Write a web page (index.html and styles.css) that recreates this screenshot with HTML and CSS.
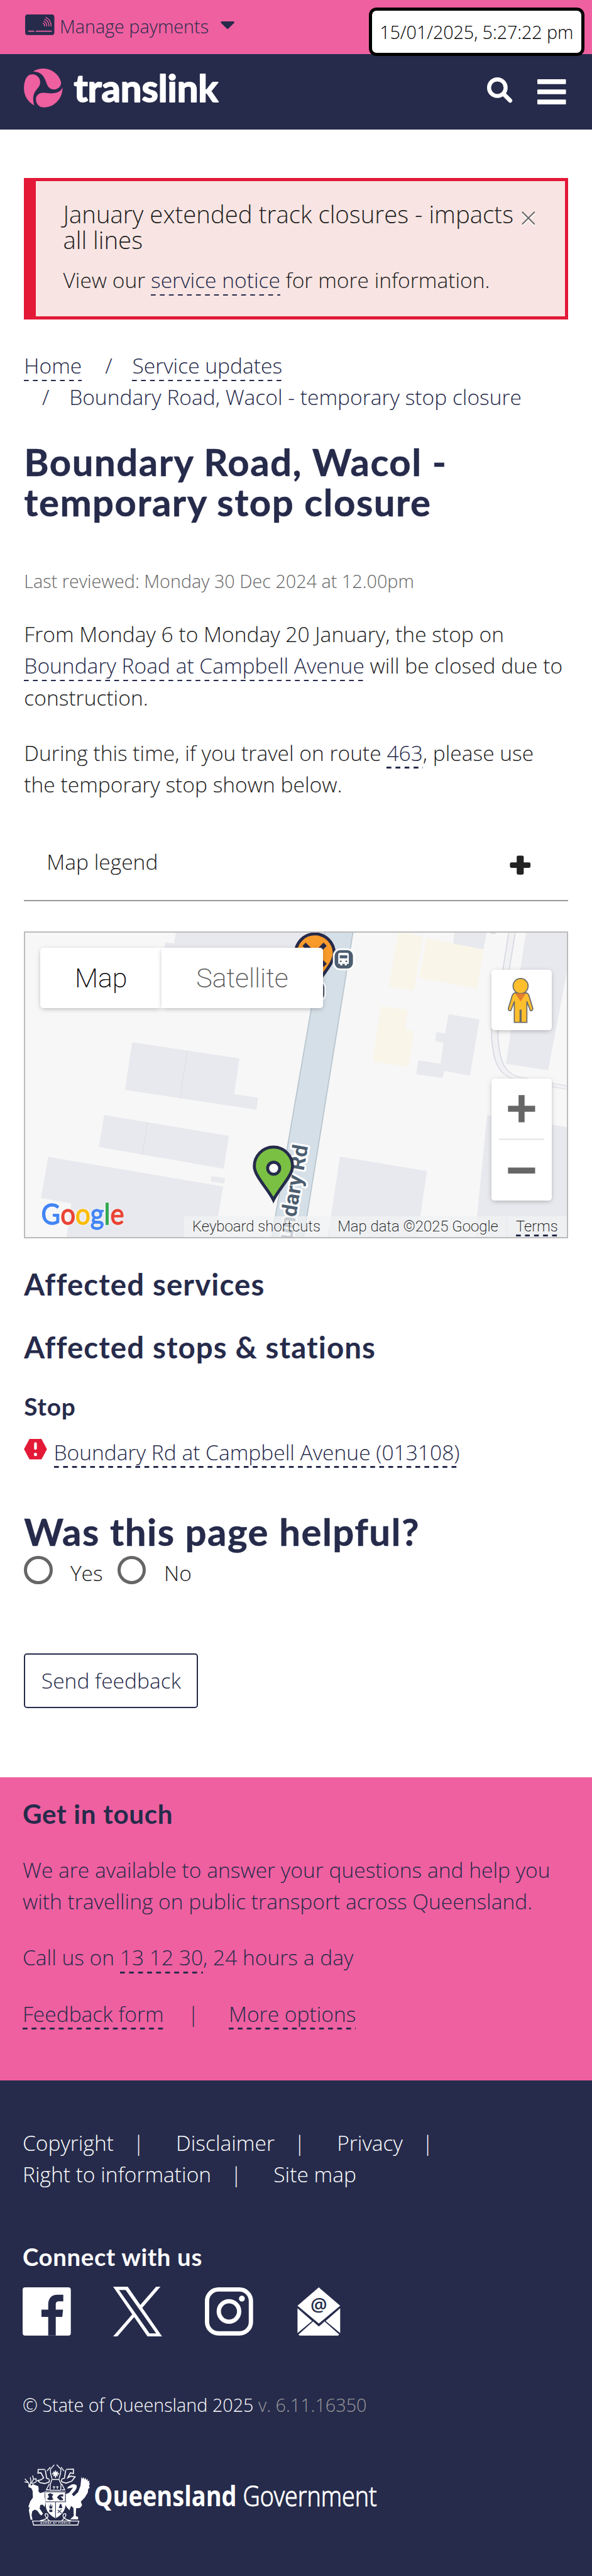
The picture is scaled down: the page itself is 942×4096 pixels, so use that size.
FILE: index.html
```
<!DOCTYPE html>
<html lang="en">
<head>
<meta charset="utf-8">
<title>Boundary Road, Wacol - temporary stop closure | Translink</title>
<link rel="stylesheet" href="styles.css">
</head>
<body>
<div class="topbar">
  <svg class="card-icon" viewBox="0 0 58 41"><rect width="58" height="41" rx="5" fill="#262b4b"/><path d="M7 33.3H17M22 33.3H52" stroke="#ef60a0" stroke-width="2.4" stroke-linecap="round"/><g fill="none" stroke="#ef60a0" stroke-width="1.7" stroke-linecap="round"><path d="M35.5 17.5Q39 19 39 23"/><path d="M37 13.5Q43 16 43 23"/><path d="M39 9.7Q47.500 13 47.300 23"/><path d="M41.300 6Q51.500 10 51.500 23"/></g></svg>
  <span class="topbar-label">Manage payments</span>
  <svg class="caret" viewBox="0 0 28 16"><path d="M1.500 0H26.500Q28.500 1.500 27 3L15.500 14.500Q14 16 12.500 14.500L1 3Q-.5 1.500 1.500 0Z" fill="#262b4b"/></svg>
  <div class="timestamp">15/01/2025, 5:27:22 pm</div>
</div>
<header class="header">
  <svg class="logo" viewBox="24 350 1162 235"><g fill="#ef60a0"><path d="M78 368C95 357 118 350 142 350C190 352 235 385 246 432C248 455 230 474 203 475C175 474 165 455 157 432C145 395 125 368 78 368Z"/><path d="M84 386C105 390 121 408 121 432C121 450 112 462 100 475C80 498 73 530 86 570C50 550 24 515 24 468C24 435 35 395 60 387C68 385 76 384 84 386Z"/><path d="M255 462C256 530 205 582 145 582C112 582 94 556 96 530C98 508 118 494 140 495C165 497 190 502 215 495C235 490 248 480 255 462Z"/></g><text class="logo-text" x="322" y="549" textLength="864">translink</text></svg>
  <div class="header-tools">
    <svg class="search" viewBox="0 0 51 50"><circle cx="20.500" cy="20.500" r="16.500" fill="none" stroke="#fff" stroke-width="8"/><path d="M33.500 33.500L46 46" stroke="#fff" stroke-width="8.500" stroke-linecap="round"/></svg>
    <svg class="burger" viewBox="0 0 57 50"><g fill="#fff"><rect width="57" height="9.600" rx="1.500"/><rect y="20.200" width="57" height="9.600" rx="1.500"/><rect y="40.400" width="57" height="9.600" rx="1.500"/></g></svg>
  </div>
</header>

<main class="main">
  <section class="alert">
    <div class="alert-head">
      <h4 class="alert-title">January extended track closures - impacts all lines</h4>
      <svg class="close" viewBox="0 0 27 30"><path d="M1 4L26 29M26 4L1 29" stroke="#fff" stroke-width="2.500"/><path d="M1 1L26 26M26 1L1 26" stroke="#666" stroke-width="2.500"/></svg>
    </div>
    <p class="alert-text">View our <a class="link">service notice</a> for more information.</p>
  </section>

  <nav class="crumbs">
    <div><a class="link">Home</a><span class="slash">/</span><a class="link">Service updates</a></div>
    <div class="crumb-last"><span class="slash slash-first">/</span>Boundary Road, Wacol - temporary stop closure</div>
  </nav>

  <h1 class="title">Boundary Road, Wacol -<br>temporary stop closure</h1>
  <p class="reviewed">Last reviewed: Monday 30 Dec 2024 at 12.00pm</p>
  <p class="para">From Monday 6 to Monday 20 January, the stop on<br><a class="link">Boundary Road at Campbell Avenue</a> will be closed due to<br>construction.</p>
  <p class="para">During this time, if you travel on route <a class="link">463</a>, please use<br>the temporary stop shown below.</p>

  <div class="legend"><span>Map legend</span>
    <svg class="plus" viewBox="0 0 42 39"><path d="M17 0.500h8q3 0 3 3v10.500h10.500q3 0 3 3v5q0 3-3 3H28v10.500q0 3-3 3h-8q-3 0-3-3V25H3.500q-3 0-3-3v-5q0-3 3-3H14V3.500q0-3 3-3z" fill="#222"/></svg>
  </div>

  <div class="map">
    <svg class="map-canvas" viewBox="51 17 1077 605" preserveAspectRatio="none">
      <rect x="48" y="14" width="1083" height="611" fill="#f7f7f7"/>
      <g transform="scale(.75191 .40816)">
        <g fill="#e8e9ee">
          <path d="M468 30H860L845 120H436L438 88L462 93Z"/>
          <path d="M351 575L635 654L621 827L684 845L680 903L332 807Z"/>
          <path d="M277 929L607 1031L593 1190L263 1085Z"/>
          <path d="M129 1133L592 1277L568 1530H177L190 1360L110 1333Z"/>
          <path d="M561 1226L597 1237L594 1263L559 1252Z"/>
          <path d="M901 1131L1131 1202L1105 1530H868Z"/>
          <path d="M1189 438L1270 464L1245 737L1177 714L1173 749L1103 731L1108 662L1167 680L1175 577L1153 570L1156 525L1179 532Z"/>
          <path d="M1205 30H1290L1281 123L1200 98Z"/>
          <path d="M1394 30H1510V150L1452 711L1340 680Z"/>
          <path d="M1290 930L1510 990V1530H1258Z"/>
        </g>
        <path d="M497 616L478 847M392 966L378 1120" stroke="#dfe0e7" stroke-width="2"/>
        <g fill="#f9f5e9"><path d="M1056 30L1121 62L1096 325L1030 303Z"/><path d="M1130 70L1281 123L1264 313L1111 262Z"/><path d="M1008 401L1080 417L1073 515L1096 519L1082 696L988 669Z"/></g>
        <path d="M1356 42L1338 250C1320 420 1305 500 1312 580C1318 690 1335 740 1380 755L1504 797" fill="none" stroke="#d7dae2" stroke-width="20"/>
        <path d="M1356 42L1338 250C1320 420 1305 500 1312 580C1318 690 1335 740 1380 755L1504 797" fill="none" stroke="#f1f1f4" stroke-width="14"/>
        <ellipse cx="1306" cy="38" rx="8" ry="10" fill="#d7dae2"/>
        <path d="M862 20H937L803 1540H719Z" fill="#d5dfe7" stroke="#b9c6cf" stroke-width="3"/>
      </g>
      <text class="road" transform="translate(614 441) rotate(-80.200)" text-anchor="end">Boundary Rd</text>
      <g stroke="#262b4b" stroke-width="6">
        <path d="M627 126C617 106 589 78 589 58A38 38 0 1 1 666 58C666 78 637 106 627 126Z" fill="#f99b2b"/>
        <path d="M606 40L648 82M648 40L606 82" stroke-width="9"/>
        <path d="M545 548C535 527 507 500 507 481A38 38 0 1 1 583 481C583 500 555 527 545 548Z" fill="#7ac143"/>
        <circle cx="545.500" cy="485" r="12" fill="#fff"/>
      </g>
      <rect x="605" y="112" width="43" height="41" rx="14" fill="#4d5e70" stroke="#fff" stroke-width="3"/>
      <rect x="665" y="50" width="40" height="40" rx="13" fill="#4d5e70" stroke="#fff" stroke-width="3.500"/>
      <path d="M674 61Q674 57 678 57H691Q695 57 695 61V79H691V82H687V79H682V82H678V79H674Z" fill="#fff"/>
      <path d="M677 62H692V68H677Z" fill="#4d5e70"/><circle cx="679" cy="74" r="1.800" fill="#4d5e70"/><circle cx="690" cy="74" r="1.800" fill="#4d5e70"/>
      <text class="google" x="83" y="596.500" textLength="165" lengthAdjust="spacingAndGlyphs"><tspan class="g-blue">G</tspan><tspan class="g-red">o</tspan><tspan class="g-yellow">o</tspan><tspan class="g-blue">g</tspan><tspan class="g-green">l</tspan><tspan class="g-red">e</tspan></text>
    </svg>
    <div class="map-types"><span class="type type-map">Map</span><span class="type type-sat">Satellite</span></div>
    <div class="pegman"><svg viewBox="0 0 51 90"><g stroke="#6b6b6b" stroke-width="2.200" stroke-linejoin="round"><path d="M13 30H38Q42 32 43 38L50 61Q49 66 45 65L38 47L38 88.500H26.500V64H24.500V88.500H13V47L6 65Q1 66 1 61L8 38Q9 32 13 30Z" fill="#fdbf2d"/><circle cx="25.500" cy="16" r="15" fill="#fdbf2d"/></g><path d="M15 31H36L25.500 47Z" fill="#e47f31"/></svg></div>
    <div class="zoom"><svg viewBox="0 0 120 243"><path d="M33 60H87M60 33V87M33 183H87" stroke="#666" stroke-width="12"/><path d="M15 121H105" stroke="#e6e6e6" stroke-width="3"/></svg></div>
    <div class="credits"><span class="credit c-keys">Keyboard shortcuts</span><span class="credit c-data">Map data ©2025 Google</span><span class="credit c-terms"><a class="link">Terms</a></span></div>
  </div>

  <h2 class="h2">Affected services</h2>
  <h2 class="h2 h2-next">Affected stops &amp; stations</h2>
  <h3 class="h3">Stop</h3>
  <div class="stop"><svg class="warn" viewBox="0 0 46 41"><path d="M11 0H35L46 20.500L35 41H11L0 20.500Z" fill="#e31937"/><path d="M23 9.500V19" stroke="#fff" stroke-width="5.500" stroke-linecap="round"/><circle cx="23" cy="31" r="3.200" fill="#fff"/></svg><a class="link">Boundary Rd at Campbell Avenue (013108)</a></div>

  <h1 class="title helpful">Was this page helpful?</h1>
  <div class="radios"><i class="radio"></i><span class="r-yes">Yes</span><i class="radio"></i><span class="r-no">No</span></div>
  <button class="send">Send feedback</button>
</main>

<section class="touch">
  <h3 class="touch-title">Get in touch</h3>
  <p class="touch-p">We are available to answer your questions and help you<br>with travelling on public transport across Queensland.</p>
  <p class="touch-p">Call us on <a class="link">13 12 30</a>, 24 hours a day</p>
  <p class="touch-p"><a class="link">Feedback form</a><span class="pipe-wide">|</span><a class="link">More options</a></p>
</section>

<footer class="footer">
  <div class="foot-links">Copyright<span class="pipe">|</span>Disclaimer<span class="pipe">|</span>Privacy<span class="pipe">|</span><br>Right to information<span class="pipe">|</span>Site map</div>
  <h3 class="connect">Connect with us</h3>
  <div class="social">
    <svg viewBox="0 0 96 96"><rect width="96" height="96" rx="5" fill="#fff"/><path d="M51 96V58.700H37.500V44.300H51V34C51 22 58 14.700 69 14.700H81V28H73C68 28 66 30 66 34V44.300H80.500L79 58.700H66V96Z" fill="#262b4b"/></svg>
    <svg viewBox="0 0 1200 1227" class="x-logo" preserveAspectRatio="none"><path fill="#fff" d="M714.163 519.284L1160.890 0H1055.030L667.137 450.887L357.328 0H0L468.492 681.821L0 1226.370H105.866L515.491 750.218L842.672 1226.370H1200L714.137 519.284ZM569.165 687.828L521.697 619.934L144.011 79.694H306.615L611.412 515.685L658.880 583.579L1055.080 1150.300H892.476L569.165 687.854Z"/></svg>
    <svg viewBox="0 0 96 96"><g fill="none" stroke="#fff" stroke-width="8.600"><rect x="4.300" y="4.300" width="87.400" height="87.400" rx="23"/><circle cx="48" cy="48" r="20.300"/></g><circle cx="73.700" cy="22.500" r="5.900" fill="#fff"/></svg>
    <svg viewBox="-3 0 96 96"><path d="M42.400 0L85 36.500L42.400 72L0 36.500ZM0 41.500L29 67L0 91ZM85 41.500L56 67L85 91ZM31 68L42.400 78L54 68L83 94Q82 96 80 96H5Q3 96 2 94Z" fill="#fff"/><text class="at" x="42.400" y="48" text-anchor="middle">@</text></svg>
  </div>
  <p class="copy">© State of Queensland 2025 <span class="version">v. 6.11.16350</span></p>
  <svg class="gov" viewBox="54 40 2130 368">
    <g fill="#fff">
      <path d="M80 163L100 168L108 160L140 172L143 190L140 200L150 214L178 206V232L184 270L178 296L166 282L152 284L148 306L168 336L158 347L148 338L134 318L118 312L104 322L100 346L106 372H94L84 318L88 296L80 298L92 262L108 240L106 200L98 184L82 178Z"/>
      <path d="M398 116L404 128L411 118L415 132L424 122L426 137L435 128L436 144L446 138L443 153L448 156L443 170L447 180L438 190L436 210L418 240L394 264L402 286L390 302L366 304L364 350L378 356V370H330L352 350L350 302L336 290L326 316L312 300L298 280L306 262L302 220L324 212L342 188L348 180L312 186L318 176L340 162Q356 156 368 166Q374 178 362 196L340 220L352 232L378 208L392 170Z"/>
      <path d="M180 202H304V266L300 302Q290 340 243 364Q196 340 186 302Z"/>
    </g>
    <g fill="none" stroke="#fff" stroke-width="5">
      <path d="M106 380L112 404H376L382 380Z"/><path d="M150 378Q190 372 198 354Q200 334 184 336Q172 346 206 378M336 378Q296 372 288 354Q286 334 302 336Q314 346 280 378"/>
      <path d="M90 168L80 150L60 128M80 150L58 146M92 166L96 140L92 118M98 156L112 130L106 108M102 158L128 146L126 124M112 130L128 128"/>
      <path d="M236 44L212 72L214 100L222 128M250 44L276 72L272 100L264 128M192 82L212 58M294 82L276 58"/>
      <path d="M180 72L140 72L138 94L156 92L172 122L156 134L136 138L152 152L178 156L204 148L208 132M182 76L190 124L204 130M306 72L350 70L350 96L332 92L316 122L334 112L360 116L340 142L306 154L280 146L278 132M304 76L296 124L280 130" stroke-width="6"/>
      <path d="M222 132H264L276 160L274 196H210L212 160ZM206 158L188 194H206M280 158L298 194H280"/>
      <path d="M243 78V122M222 98H264M230 86L256 112M256 86L230 112" stroke-width="7"/>
      <path d="M234 170V190M226 177H242M254 170V190M246 177H262" stroke-width="4"/>
    </g>
    <g fill="none" stroke="#262b4b" stroke-width="4"><path d="M184 265H304M243 268V362M184 206H302V262"/><path d="M256 332L278 312M256 314L280 334" stroke-width="4"/></g>
    <g fill="#262b4b"><path d="M196 220L212 214L230 222L222 234L230 252L206 256L192 248L204 236ZM252 240Q262 216 290 222L288 234L272 232L288 248V256H268ZM262 302L270 278L278 278L284 304Z"/><path d="M202 280L208 306H222L228 280L220 296L215 274L210 296ZM206 312H224V326H206Z"/></g>
    <text class="motto" x="244" y="398" text-anchor="middle">AUDAX AT FIDELIS</text>
    <text class="gov-bold" transform="translate(472 293) scale(.864 1)">Queensland</text>
    <text class="gov-light" transform="translate(1362 293) scale(.858 1)">Government</text>
  </svg>
</footer>
</body>
</html>
```
FILE: styles.css
```
/* 1rem is ten layout pixels of the mobile design */
html { font-size: 23.969px; }
body {
  margin: 0;
  background: #fff;
  color: #222;
  font: 300 1.4rem/2.1rem "Open Sans", "Noto Sans", sans-serif;
}
h1, h2, h3, h4, p { margin: 0; }
svg { display: block; flex: none; overflow: visible; }

.link {
  color: #262b4b;
  padding-bottom: .09rem;
  background: linear-gradient(90deg, #262b4b 50%, transparent 50%) 0 100% / .6rem .11rem repeat-x;
}

.topbar {
  position: relative;
  display: flex;
  align-items: flex-start;
  height: 3.6rem;
  padding-left: 1.65rem;
  background: #ef60a0;
  color: #262b4b;
}
.card-icon { width: 1.94rem; height: 1.37rem; margin-top: .97rem; }
.topbar-label { margin: .84rem .78rem 0 .37rem; font-size: 1.2rem; line-height: 1.8rem; }
.caret { width: .93rem; height: .53rem; margin-top: 1.4rem; }
.timestamp {
  position: absolute;
  top: .5rem;
  right: .5rem;
  box-sizing: border-box;
  width: 14.33rem;
  height: 3.2rem;
  border: 5px solid #000;
  border-radius: .5rem;
  background: #fff;
  color: #000;
  font-size: 1.2rem;
  line-height: 2.82rem;
  text-align: center;
  letter-spacing: -.1px;
}

.header {
  display: flex;
  justify-content: space-between;
  align-items: flex-start;
  height: 5rem;
  padding: 0 1.73rem 0 1.6rem;
  background: #262b4b;
}
.logo { width: 12.91rem; height: 2.61rem; margin-top: .96rem; }
.logo-text { font: 700 225px Lato, sans-serif; fill: #fff; stroke: #fff; stroke-width: 7px; stroke-linejoin: round; }
.header-tools { display: flex; gap: 1.63rem; }
.search { width: 1.7rem; height: 1.67rem; margin-top: 1.53rem; }
.burger { width: 1.9rem; height: 1.67rem; margin-top: 1.67rem; }

.main { height: 106.1rem; padding: 3.2rem 1.6rem 0; }

.alert {
  box-sizing: border-box;
  height: 9.4rem;
  padding: 1.35rem 0 0 1.8rem;
  border: 5px solid #e31937;
  border-left-width: .8rem;
  background: #f8e5e3;
}
.alert-head { display: flex; }
.alert-title { width: 30.3rem; font-weight: 300; font-size: 1.6rem; line-height: 1.7rem; }
.close { width: .9rem; height: 1rem; margin: .66rem 0 0 .14rem; }
.alert-text { margin-top: .77rem; }

.crumbs { margin-top: 2rem; color: #262b4b; }
.slash { margin: 0 1.32rem 0 1.55rem; }
.slash-first { margin-left: 1.2rem; }

.title {
  margin-top: 1.88rem;
  font: 700 2.5rem/2.69rem Lato, sans-serif;
  letter-spacing: 1.5px;
  -webkit-text-stroke: .5px #262b4b;
  color: #262b4b;
}
.reviewed { margin-top: 2.97rem; font-size: 1.2rem; line-height: 1.8rem; color: #666; }
.para { margin-top: 1.58rem; }

.legend {
  box-sizing: border-box;
  display: flex;
  justify-content: space-between;
  height: 3.67rem;
  margin-top: 3.03rem;
  padding: 0 2.45rem 0 1.5rem;
  border-bottom: .1rem solid #999;
}
.plus { width: 1.4rem; height: 1.3rem; margin-top: .64rem; }

.map {
  position: relative;
  box-sizing: border-box;
  height: 20.37rem;
  margin-top: 2rem;
  border: .1rem solid #bbb;
  font-family: Roboto, sans-serif;
  font-weight: 200;
  overflow: hidden;
}
.map-canvas { width: 100%; height: 100%; }
.road { font: 700 42px Roboto, sans-serif; fill: #4d5e70; stroke: #fff; stroke-width: 8px; stroke-linejoin: round; paint-order: stroke; }
.google { font: 400 57px Lato, sans-serif; stroke-width: 1.600px; stroke-linejoin: round; filter: drop-shadow(0 0 2px #fff); }
.g-blue { fill: #4285f4; stroke: #4285f4; }
.g-red { fill: #ea4335; stroke: #ea4335; }
.g-yellow { fill: #fbbc05; stroke: #fbbc05; }
.g-green { fill: #34a853; stroke: #34a853; }
.map-types { position: absolute; top: .99rem; left: 1rem; display: flex; font-size: 1.8rem; line-height: 4.05rem; }
.type { box-sizing: border-box; height: 4rem; background: #fff; box-shadow: 0 2px 8px -2px rgba(0, 0, 0, .35); text-align: center; letter-spacing: -.1px; }
.type-map { width: 8.05rem; border-radius: .2rem 0 0 .2rem; color: #000; }
.type-sat { width: 10.7rem; border-radius: 0 .2rem .2rem 0; color: #565656; }
.pegman, .zoom { position: absolute; right: 1rem; width: 4rem; background: #fff; border-radius: .2rem; box-shadow: 0 2px 8px -2px rgba(0, 0, 0, .35); }
.pegman { top: 2.47rem; height: 4rem; }
.pegman svg { width: 1.7rem; height: 3rem; margin: .52rem auto 0 1.1rem; }
.zoom { top: 9.67rem; height: 8.1rem; }
.credits { position: absolute; right: 0; bottom: 0; display: flex; gap: .05rem; font-size: 1rem; line-height: 1.4rem; color: #000; }
.credit { height: 1.4rem; background: rgba(240, 241, 243, .75); text-align: center; white-space: nowrap; }
.c-keys { width: 9.6rem; }
.c-data { width: 11.75rem; }
.c-terms { width: 3.95rem; }
.c-terms .link { padding-bottom: .08rem; color: #000; }

.h2 { margin-top: 1.94rem; font: 700 1.98rem/2.16rem Lato, sans-serif; letter-spacing: 1.1px; font-variant-ligatures: none; color: #262b4b; }
.h2-next { margin-top: 2.03rem; }
.h3 { margin-top: 1.97rem; font: 700 1.62rem/1.76rem Lato, sans-serif; letter-spacing: .8px; color: #262b4b; }
.stop { display: flex; align-items: flex-start; height: 2.1rem; margin-top: 1.1rem; }
.stop .link { display: block; height: 2.1rem; padding: 0; }
.warn { width: 1.54rem; height: 1.36rem; margin: .2rem .43rem 0 0; }
.helpful { margin-top: 2.88rem; }
.radios { display: flex; align-items: flex-start; height: 2.2rem; margin-top: .26rem; }
.radio { box-sizing: border-box; width: 1.9rem; height: 1.9rem; border: 5px solid #666; border-radius: 50%; }
.r-yes, .r-no { margin: .1rem .96rem 0 1.17rem; }
.r-no { margin-left: 1.2rem; }
.send {
  display: block;
  box-sizing: border-box;
  width: 11.56rem;
  height: 3.62rem;
  margin-top: 4.3rem;
  padding: 0;
  border: .1rem solid #262b4b;
  border-radius: .2rem;
  background: #fff;
  color: #262b4b;
  font: inherit;
  line-height: 3.3rem;
}

.touch { box-sizing: border-box; height: 20.1rem; padding: 1.48rem 1.5rem 0; background: #ef60a0; color: #262b4b; }
.touch-title { font: 700 1.76rem/1.93rem Lato, sans-serif; letter-spacing: .7px; }
.touch-p { margin-top: 1.62rem; }
.touch-title + .touch-p { margin-top: 1.68rem; }
.pipe-wide { margin: 0 1.97rem 0 1.58rem; }

.footer { box-sizing: border-box; height: 32.9rem; padding: 3.1rem 1.5rem 0; background: #262b4b; color: #fff; }
.pipe { margin: 0 2.1rem 0 1.28rem; }
.connect { margin-top: 3.52rem; font: 700 1.6rem/1.76rem Lato, sans-serif; letter-spacing: .65px; }
.social { display: flex; gap: 2.85rem; height: 3.2rem; margin-top: 1.15rem; }
.social svg { width: 3.2rem; height: 3.2rem; }
.social .x-logo { width: 3.25rem; height: 3.3rem; margin: -.04rem 0 0 -.05rem; }
.at { font: 600 37px "Open Sans", sans-serif; fill: #262b4b; }
.copy { margin-top: 3.7rem; font-size: 1.2rem; line-height: 1.8rem; }
.version { color: #999; }
.gov { width: 23.67rem; height: 4.09rem; margin: 3.03rem 0 0 .1rem; }
.motto { font: 700 15px "Open Sans", sans-serif; fill: #fff; letter-spacing: 3px; }
.gov-bold { font: 700 165px "Open Sans", sans-serif; fill: #fff; }
.gov-light { font: 300 165px "Open Sans", sans-serif; fill: #fff; stroke: #fff; stroke-width: 4px; }
```
